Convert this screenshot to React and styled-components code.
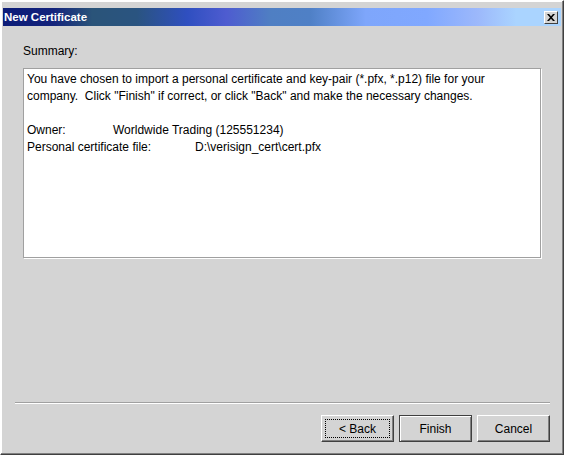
import React from "react";
import styled, { createGlobalStyle } from "styled-components";

const GlobalStyle = createGlobalStyle`
  html, body {
    margin: 0;
    padding: 0;
    background: #ffffff;
  }
  body {
    font-family: "Liberation Sans", Arial, sans-serif;
  }
`;

// window frame

const Window = styled.div`
  width: 564px;
  height: 455px;
  box-sizing: border-box;
  background: #d4d4d4;
  border-top: 1px solid #ffffff;
  border-left: 1px solid #ffffff;
  border-right: 1px solid #404040;
  border-bottom: 1px solid #404040;
  box-shadow: inset -1px -1px 0 #808080, inset 1px 1px 0 #ffffff;
  padding: 7px 2px 0 2px;
  display: flex;
  flex-direction: column;
`;

const TitleBar = styled.div`
  height: 18px;
  display: flex;
  align-items: center;
  justify-content: space-between;
  padding: 0 3px 0 1px;
  background: linear-gradient(
    to right,
    #0c1c78 0%,
    #14237c 9%,
    #2a5479 16%,
    #2a5480 24%,
    #2f4fc0 33%,
    #4e5cd0 40%,
    #4f7fc3 48%,
    #4f80c6 55%,
    #7ea6fb 65%,
    #80a8ff 76%,
    #9cb8fb 85%,
    #aad4ff 92%,
    #aad4ff 100%
  );
`;

const Title = styled.span`
  color: #ffffff;
  font-weight: bold;
  font-size: 11.5px;
  line-height: 18px;
`;

const CloseButton = styled.div`
  width: 14px;
  height: 13px;
  box-sizing: border-box;
  background: #d4d4d4;
  border-top: 1px solid #ffffff;
  border-left: 1px solid #ffffff;
  border-right: 1px solid #404040;
  border-bottom: 1px solid #404040;
  display: flex;
  align-items: center;
  justify-content: center;
`;

// body

const Body = styled.div`
  flex: 1;
  display: flex;
  flex-direction: column;
  padding: 0 11px 0 12px;
`;

const Label = styled.div`
  font-size: 12px;
  line-height: 14px;
  color: #000;
  margin: 18px 0 0 8px;
`;

const SummaryBox = styled.div`
  margin: 10px 0 0 8px;
  width: 518px;
  height: 190px;
  box-sizing: border-box;
  background: #ffffff;
  border: 1px solid #a0a0a0;
  box-shadow: 1px 1px 0 #ffffff;
  padding: 2px 3px;
  font-size: 12px;
  line-height: 17px;
  color: #000;
`;

const Line = styled.div`
  white-space: pre;
  min-height: 17px;
`;

const Key = styled.span`
  display: inline-block;
  width: ${(p) => p.$w}px;
`;

const Separator = styled.div`
  margin-top: auto;
  height: 1px;
  background: #a0a0a0;
  border-bottom: 1px solid #ffffff;
`;

const ButtonRow = styled.div`
  display: flex;
  justify-content: flex-end;
  gap: 5px;
  padding: 11px 0 12px;
`;

const Button = styled.button`
  width: 73px;
  height: 27px;
  box-sizing: border-box;
  background: #d4d4d4;
  font-family: "Liberation Sans", Arial, sans-serif;
  font-size: 12px;
  color: #000;
  padding: 0;
  position: relative;
  border-top: 1px solid ${(p) => (p.$default ? "#404040" : "#ffffff")};
  border-left: 1px solid ${(p) => (p.$default ? "#404040" : "#ffffff")};
  border-right: 1px solid #404040;
  border-bottom: 1px solid #404040;
  box-shadow: ${(p) =>
    p.$default
      ? "inset 1px 1px 0 #ffffff, inset -1px -1px 0 #808080"
      : "inset -1px -1px 0 #808080"};
`;

const Focus = styled.span`
  position: absolute;
  inset: 3px;
  border: 1px dotted #000;
`;

const ButtonText = styled.span`
  position: relative;
`;

const App = () => {
  return (
    <>
      <GlobalStyle />
      <Window>
        <TitleBar>
          <Title>New Certificate</Title>
          <CloseButton>
            <svg width="8" height="7" viewBox="0 0 8 7">
              <path d="M0 0h2l2 2.2L6 0h2L5 3.5 8 7H6L4 4.8 2 7H0l3-3.5z" fill="#000" />
            </svg>
          </CloseButton>
        </TitleBar>
        <Body>
          <Label>Summary:</Label>
          <SummaryBox>
            <Line>
              You have chosen to import a personal certificate and key-pair (*.pfx, *.p12) file for your
            </Line>
            <Line>
              company.  Click "Finish" if correct, or click "Back" and make the necessary changes.
            </Line>
            <Line />
            <Line>
              <Key $w={86}>Owner:</Key>Worldwide Trading (125551234)
            </Line>
            <Line>
              <Key $w={168}>Personal certificate file:</Key>D:\verisign_cert\cert.pfx
            </Line>
          </SummaryBox>
          <Separator />
          <ButtonRow>
            <Button>
              <Focus />
              <ButtonText>&lt; Back</ButtonText>
            </Button>
            <Button $default>Finish</Button>
            <Button>Cancel</Button>
          </ButtonRow>
        </Body>
      </Window>
    </>
  );
};

export default App;
